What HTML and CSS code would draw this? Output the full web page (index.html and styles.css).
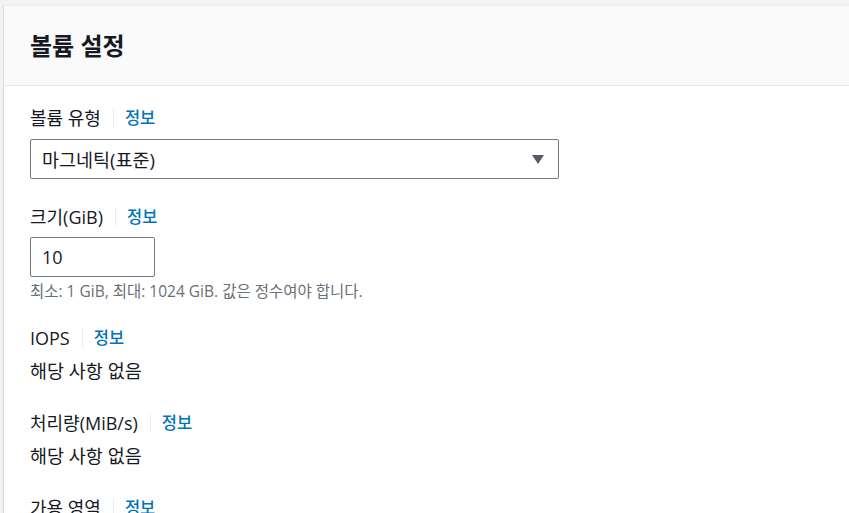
FILE: index.html
```html
<!DOCTYPE html>
<html lang="ko">
<head>
<meta charset="utf-8">
<link rel="stylesheet" href="styles.css">
</head>
<body>
<div class="page">
  <section class="card">
    <header class="card-header"><h2>볼륨 설정</h2></header>
    <div class="card-body">
      <div class="field">
        <div class="label"><span>볼륨 유형</span><span class="sep"></span><a class="info">정보</a></div>
        <div class="select">
          <span>마그네틱(표준)</span>
          <svg class="caret" width="12" height="9" viewBox="0 0 12 9"><path d="M0 0h12L6 9z" fill="#545b64"/></svg>
        </div>
      </div>
      <div class="field">
        <div class="label"><span>크기(GiB)</span><span class="sep"></span><a class="info">정보</a></div>
        <div class="input">10</div>
        <div class="hint">최소: 1 GiB, 최대: 1024 GiB. 값은 정수여야 합니다.</div>
      </div>
      <div class="field">
        <div class="label"><span>IOPS</span><span class="sep"></span><a class="info">정보</a></div>
        <div class="value">해당 사항 없음</div>
      </div>
      <div class="field">
        <div class="label"><span>처리량(MiB/s)</span><span class="sep"></span><a class="info">정보</a></div>
        <div class="value">해당 사항 없음</div>
      </div>
      <div class="field">
        <div class="label"><span>가용 영역</span><span class="sep"></span><a class="info">정보</a></div>
      </div>
    </div>
  </section>
</div>
</body>
</html>
```
FILE: styles.css
```css
html, body {
  margin: 0;
  padding: 0;
  background: #f2f3f3;
  font-family: "Open Sans", "Noto Sans CJK KR", sans-serif;
  color: #16191f;
  overflow: hidden;
}
.page {
  padding: 5px 0 0 3px;
  height: 508px;
}
.card {
  background: #ffffff;
  border-left: 1px solid #d5dbdb;
  border-top: 1px solid #eaeded;
  height: 100%;
}
.card-header {
  height: 79px;
  background: #fafafa;
  border-bottom: 1px solid #e4e7e7;
  display: flex;
  align-items: center;
  padding: 0 26px;
}
.card-header h2 {
  margin: 0;
  font-size: 24px;
  font-weight: 700;
  line-height: 30px;
}
.card-body {
  padding: 21px 26px 0;
}
.field {
  margin-bottom: 27px;
}
.label {
  display: flex;
  align-items: center;
  font-size: 18px;
  line-height: 22px;
  height: 22px;
}
.sep {
  width: 1px;
  height: 20px;
  background: #eaeded;
  margin: 0 11px 0 12px;
}
.info {
  color: #0073bb;
  font-size: 16.5px;
  font-weight: 500;
}
.select {
  margin-top: 10px;
  height: 38px;
  border: 1px solid #707a84;
  border-radius: 2px;
  display: flex;
  align-items: center;
  justify-content: space-between;
  padding: 0 14px 0 11px;
  box-sizing: content-box;
  font-size: 18.5px;
  width: 502px;
}
.caret {
  display: block;
}
.input {
  margin-top: 9px;
  width: 112px;
  height: 38px;
  border: 1px solid #707a84;
  border-radius: 2px;
  padding-left: 11px;
  display: flex;
  align-items: center;
  font-size: 18px;
}
.hint {
  margin-top: 5px;
  font-size: 15.5px;
  line-height: 18px;
  color: #687078;
}
.value {
  margin-top: 11px;
  font-size: 18.5px;
  line-height: 22px;
}
.field:nth-child(3), .field:nth-child(4) {
  margin-bottom: 30px;
}
```
